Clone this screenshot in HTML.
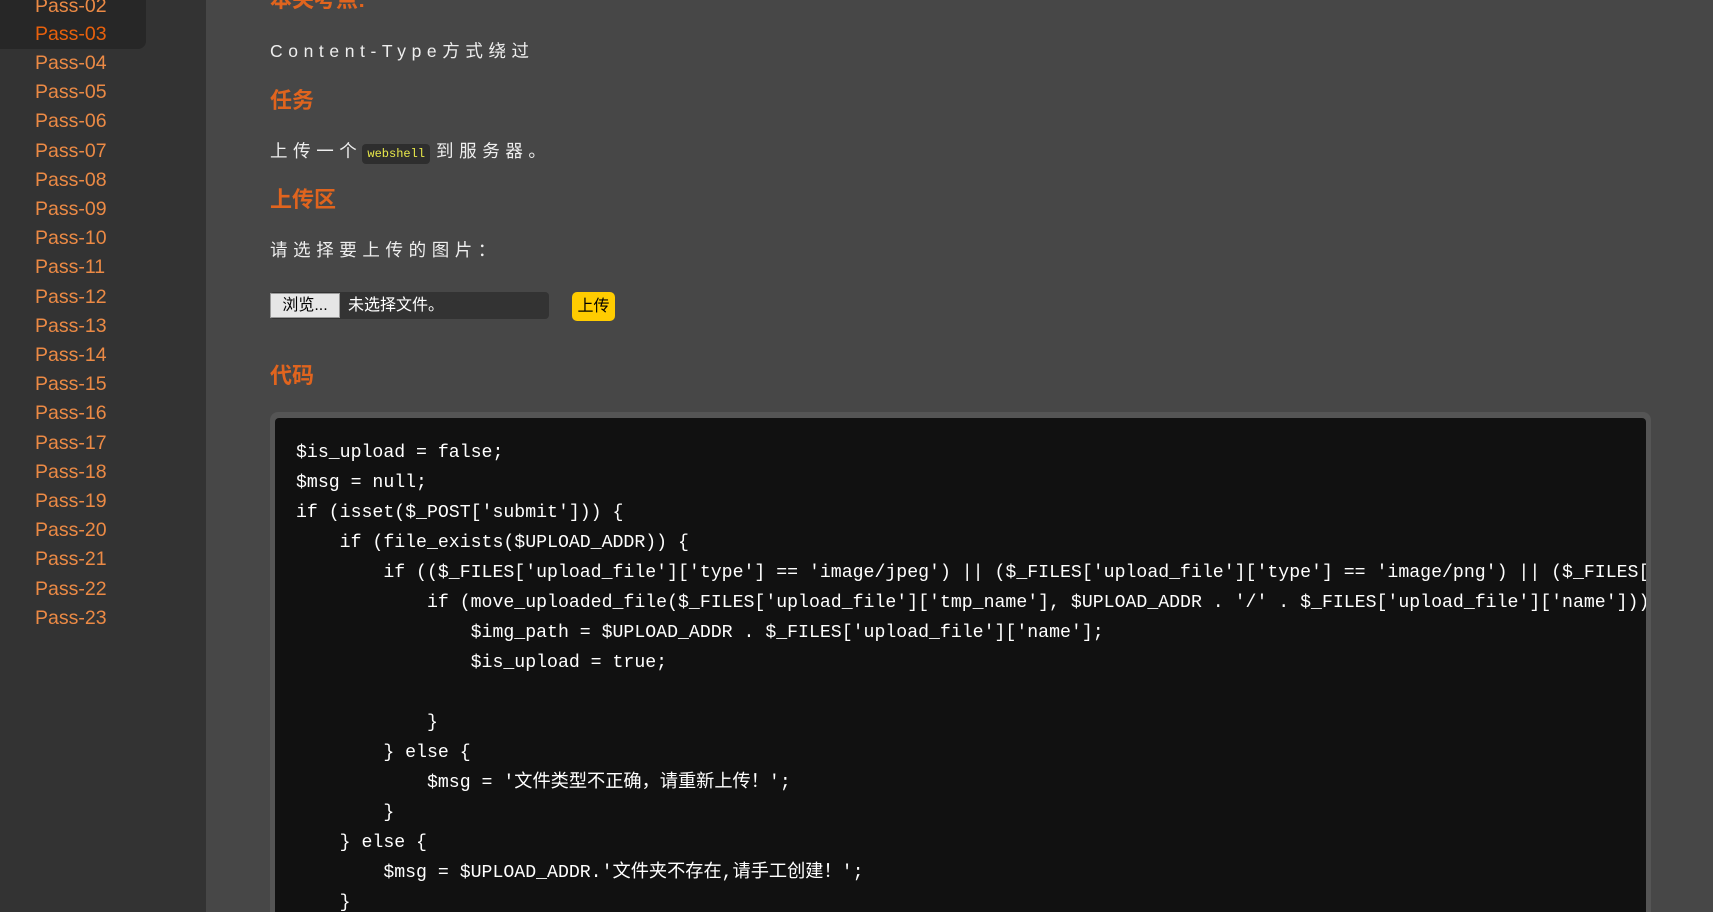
<!DOCTYPE html>
<html><head><meta charset="utf-8"><style>
*{margin:0;padding:0;box-sizing:border-box}
html,body{width:1713px;height:912px;overflow:hidden}
body{background:#474747;font-family:"Liberation Sans","Noto Sans CJK SC",sans-serif;position:relative}
#side{position:absolute;left:0;top:0;width:206px;height:912px;background:#333}
#act{position:absolute;left:0;top:-10px;width:146px;height:59px;background:#272727;border-radius:0 0 8px 0}
.p{position:absolute;left:35px;font-size:19.5px;color:#ec8a45;line-height:22px}
.p.a{color:#e8600c}
.h{position:absolute;left:270px;font-size:22px;font-weight:bold;color:#e0641e;line-height:26px}
.t{position:absolute;left:270px;font-size:17.5px;color:#eee;letter-spacing:5.6px;line-height:22px}
code.w{font-family:"Liberation Mono",monospace;font-size:12px;color:#e8e84a;background:#2e2e2e;border-radius:4px;padding:3px 5px;letter-spacing:0;margin-right:6px}
#file{position:absolute;left:270px;top:292px;width:279px;height:27px;background:#333;border-radius:4px}
#browse{position:absolute;left:0;top:1px;width:70px;height:25px;background:#e6e6e6;border:1px solid #999;font-size:16px;color:#000;text-align:center;line-height:23px}
#nofile{position:absolute;left:78px;top:0;font-size:16px;color:#fff;line-height:27px}
#up{position:absolute;left:572px;top:292px;width:43px;height:29px;background:#ffcc00;border-radius:5px;font-size:16px;color:#000;text-align:center;line-height:29px}
#box{position:absolute;left:270px;top:412px;width:1381px;height:500px;background:#555;border-radius:8px 8px 0 0}
#code{position:absolute;left:275px;top:418px;width:1371px;height:494px;background:#111;border-radius:4px 4px 0 0;overflow:hidden}
pre{position:absolute;left:21px;top:20px;font-family:"Liberation Mono","Noto Sans CJK SC",monospace;font-size:18.2px;line-height:30px;color:#fff;white-space:pre}
</style></head><body>
<div id="side"><div id="act"></div>
<div class="p" style="top:-5px">Pass-02</div>
<div class="p a" style="top:23px">Pass-03</div>
<div class="p" style="top:52px">Pass-04</div>
<div class="p" style="top:81px">Pass-05</div>
<div class="p" style="top:110px">Pass-06</div>
<div class="p" style="top:140px">Pass-07</div>
<div class="p" style="top:169px">Pass-08</div>
<div class="p" style="top:198px">Pass-09</div>
<div class="p" style="top:227px">Pass-10</div>
<div class="p" style="top:256px">Pass-11</div>
<div class="p" style="top:286px">Pass-12</div>
<div class="p" style="top:315px">Pass-13</div>
<div class="p" style="top:344px">Pass-14</div>
<div class="p" style="top:373px">Pass-15</div>
<div class="p" style="top:402px">Pass-16</div>
<div class="p" style="top:432px">Pass-17</div>
<div class="p" style="top:461px">Pass-18</div>
<div class="p" style="top:490px">Pass-19</div>
<div class="p" style="top:519px">Pass-20</div>
<div class="p" style="top:548px">Pass-21</div>
<div class="p" style="top:578px">Pass-22</div>
<div class="p" style="top:607px">Pass-23</div>
</div>
<div class="h" style="top:-13px">本关考点:</div>
<div class="t" style="top:40px">Content-Type方式绕过</div>
<div class="h" style="top:88px">任务</div>
<div class="t" style="top:140px">上传一个<code class="w">webshell</code>到服务器。</div>
<div class="h" style="top:187px">上传区</div>
<div class="t" style="top:239px">请选择要上传的图片：</div>
<div id="file"><div id="browse">浏览...</div><div id="nofile">未选择文件。</div></div>
<div id="up">上传</div>
<div class="h" style="top:363px">代码</div>
<div id="box"></div>
<div id="code"><pre>$is_upload = false;
$msg = null;
if (isset($_POST['submit'])) {
    if (file_exists($UPLOAD_ADDR)) {
        if (($_FILES['upload_file']['type'] == 'image/jpeg') || ($_FILES['upload_file']['type'] == 'image/png') || ($_FILES['upload_file']['type'] == 'image/gif')) {
            if (move_uploaded_file($_FILES['upload_file']['tmp_name'], $UPLOAD_ADDR . '/' . $_FILES['upload_file']['name'])) {
                $img_path = $UPLOAD_ADDR . $_FILES['upload_file']['name'];
                $is_upload = true;

            }
        } else {
            $msg = '文件类型不正确，请重新上传！';
        }
    } else {
        $msg = $UPLOAD_ADDR.'文件夹不存在,请手工创建！';
    }
}</pre></div>
</body></html>
